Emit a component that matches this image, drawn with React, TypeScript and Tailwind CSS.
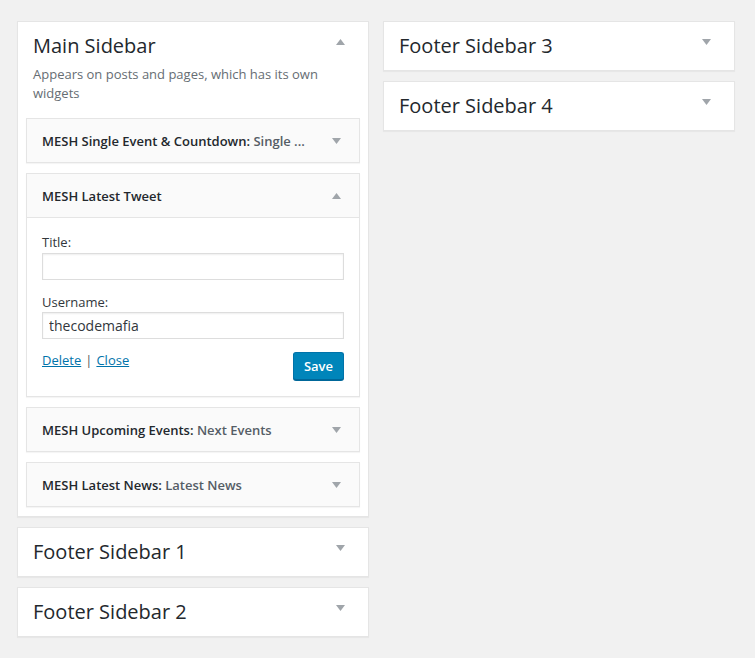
import React from "react";

const font = { fontFamily: '"Open Sans", "Noto Sans", sans-serif' };

function Arrow({ up = false }: { up?: boolean }) {
  return (
    <svg width="9" height="6" viewBox="0 0 9 6" className="shrink-0">
      {up ? <path d="M0 6 L4.5 0 L9 6 Z" fill="#a0a5aa" /> : <path d="M0 0 L9 0 L4.5 6 Z" fill="#a0a5aa" />}
    </svg>
  );
}

function SidebarHeader({ title, up = false }: { title: string; up?: boolean }) {
  return (
    <div className="flex items-start justify-between pl-[15px] pr-[23px] pt-[14px]">
      <h2 className="m-0 text-[20px] leading-[20px] font-normal text-[#23282d]">{title}</h2>
      <div className="pt-[3px]">
        <Arrow up={up} />
      </div>
    </div>
  );
}

function ClosedSidebar({ title }: { title: string }) {
  return (
    <div className="h-[50px] bg-white border border-[#e5e5e5] shadow-[0_1px_1px_rgba(0,0,0,0.04)]">
      <SidebarHeader title={title} />
    </div>
  );
}

function WidgetTop({ name, sub, up = false }: { name: string; sub?: string; up?: boolean }) {
  return (
    <div className="h-[43px] flex items-center justify-between pl-[15px] pr-[18px]">
      <h3 className="m-0 text-[13px] leading-[18px] font-semibold text-[#23282d] whitespace-nowrap">
        {name}
        {sub && (
          <>
            : <span className="text-[#555d66]">{sub}</span>
          </>
        )}
      </h3>
      <Arrow up={up} />
    </div>
  );
}

function Widget({ name, sub }: { name: string; sub?: string }) {
  return (
    <div className="bg-[#fafafa] border border-[#e5e5e5] shadow-[0_1px_1px_rgba(0,0,0,0.04)]">
      <WidgetTop name={name} sub={sub} />
    </div>
  );
}

const inputCls =
  "block w-full h-[27px] border border-[#ddd] bg-white px-[6px] text-[14px] text-[#32373c] shadow-[inset_0_1px_2px_rgba(0,0,0,0.07)] outline-none";

export default function App() {
  return (
    <div className="min-h-[658px] w-[755px] bg-[#f1f1f1] pl-[17px] pt-[21px]" style={font}>
      <div className="flex gap-[14px] items-start">
        <div className="w-[352px] flex flex-col gap-[10px]">
          <div className="bg-white border border-[#e5e5e5] shadow-[0_1px_1px_rgba(0,0,0,0.04)] pb-[9px]">
            <SidebarHeader title="Main Sidebar" up />
            <p className="m-0 mt-[9px] px-[15px] text-[13px] leading-[19px] text-[#666d73]">
              Appears on posts and pages, which has its own widgets
            </p>
            <div className="mt-[15px] px-[8px] flex flex-col gap-[10px]">
              <Widget name="MESH Single Event & Countdown" sub="Single ..." />
              <div className="bg-[#fafafa] border border-[#e5e5e5] shadow-[0_1px_1px_rgba(0,0,0,0.04)]">
                <WidgetTop name="MESH Latest Tweet" up />
                <div className="bg-white border-t border-[#e5e5e5] px-[15px] pt-[15px] pb-[16px] text-[13px] text-[#444]">
                  <div className="leading-[19.5px]">
                    <label className="block text-[#32373c]">Title:</label>
                    <input type="text" className={inputCls} style={font} defaultValue="" />
                  </div>
                  <div className="mt-[13px] leading-[19.5px]">
                    <label className="block text-[#32373c]">Username:</label>
                    <input type="text" className={inputCls} style={font} defaultValue="thecodemafia" />
                  </div>
                  <div className="mt-[13px] flex items-start justify-between">
                    <div className="pt-[1px] leading-[15px] text-[13px] text-[#555]">
                      <a className="text-[#0073aa] underline">Delete</a>
                      <span className="px-[4px]">|</span>
                      <a className="text-[#0073aa] underline">Close</a>
                    </div>
                    <button
                      className="h-[28px] px-[10px] pb-[1px] rounded-[3px] bg-[#0085ba] border border-[#0073aa] border-b-[#006799] text-white text-[13px] font-semibold leading-[26px] shadow-[0_1px_0_#006799]"
                      style={font}
                    >
                      Save
                    </button>
                  </div>
                </div>
              </div>
              <Widget name="MESH Upcoming Events" sub="Next Events" />
              <Widget name="MESH Latest News" sub="Latest News" />
            </div>
          </div>
          <ClosedSidebar title="Footer Sidebar 1" />
          <ClosedSidebar title="Footer Sidebar 2" />
        </div>
        <div className="w-[352px] flex flex-col gap-[10px]">
          <ClosedSidebar title="Footer Sidebar 3" />
          <ClosedSidebar title="Footer Sidebar 4" />
        </div>
      </div>
    </div>
  );
}
